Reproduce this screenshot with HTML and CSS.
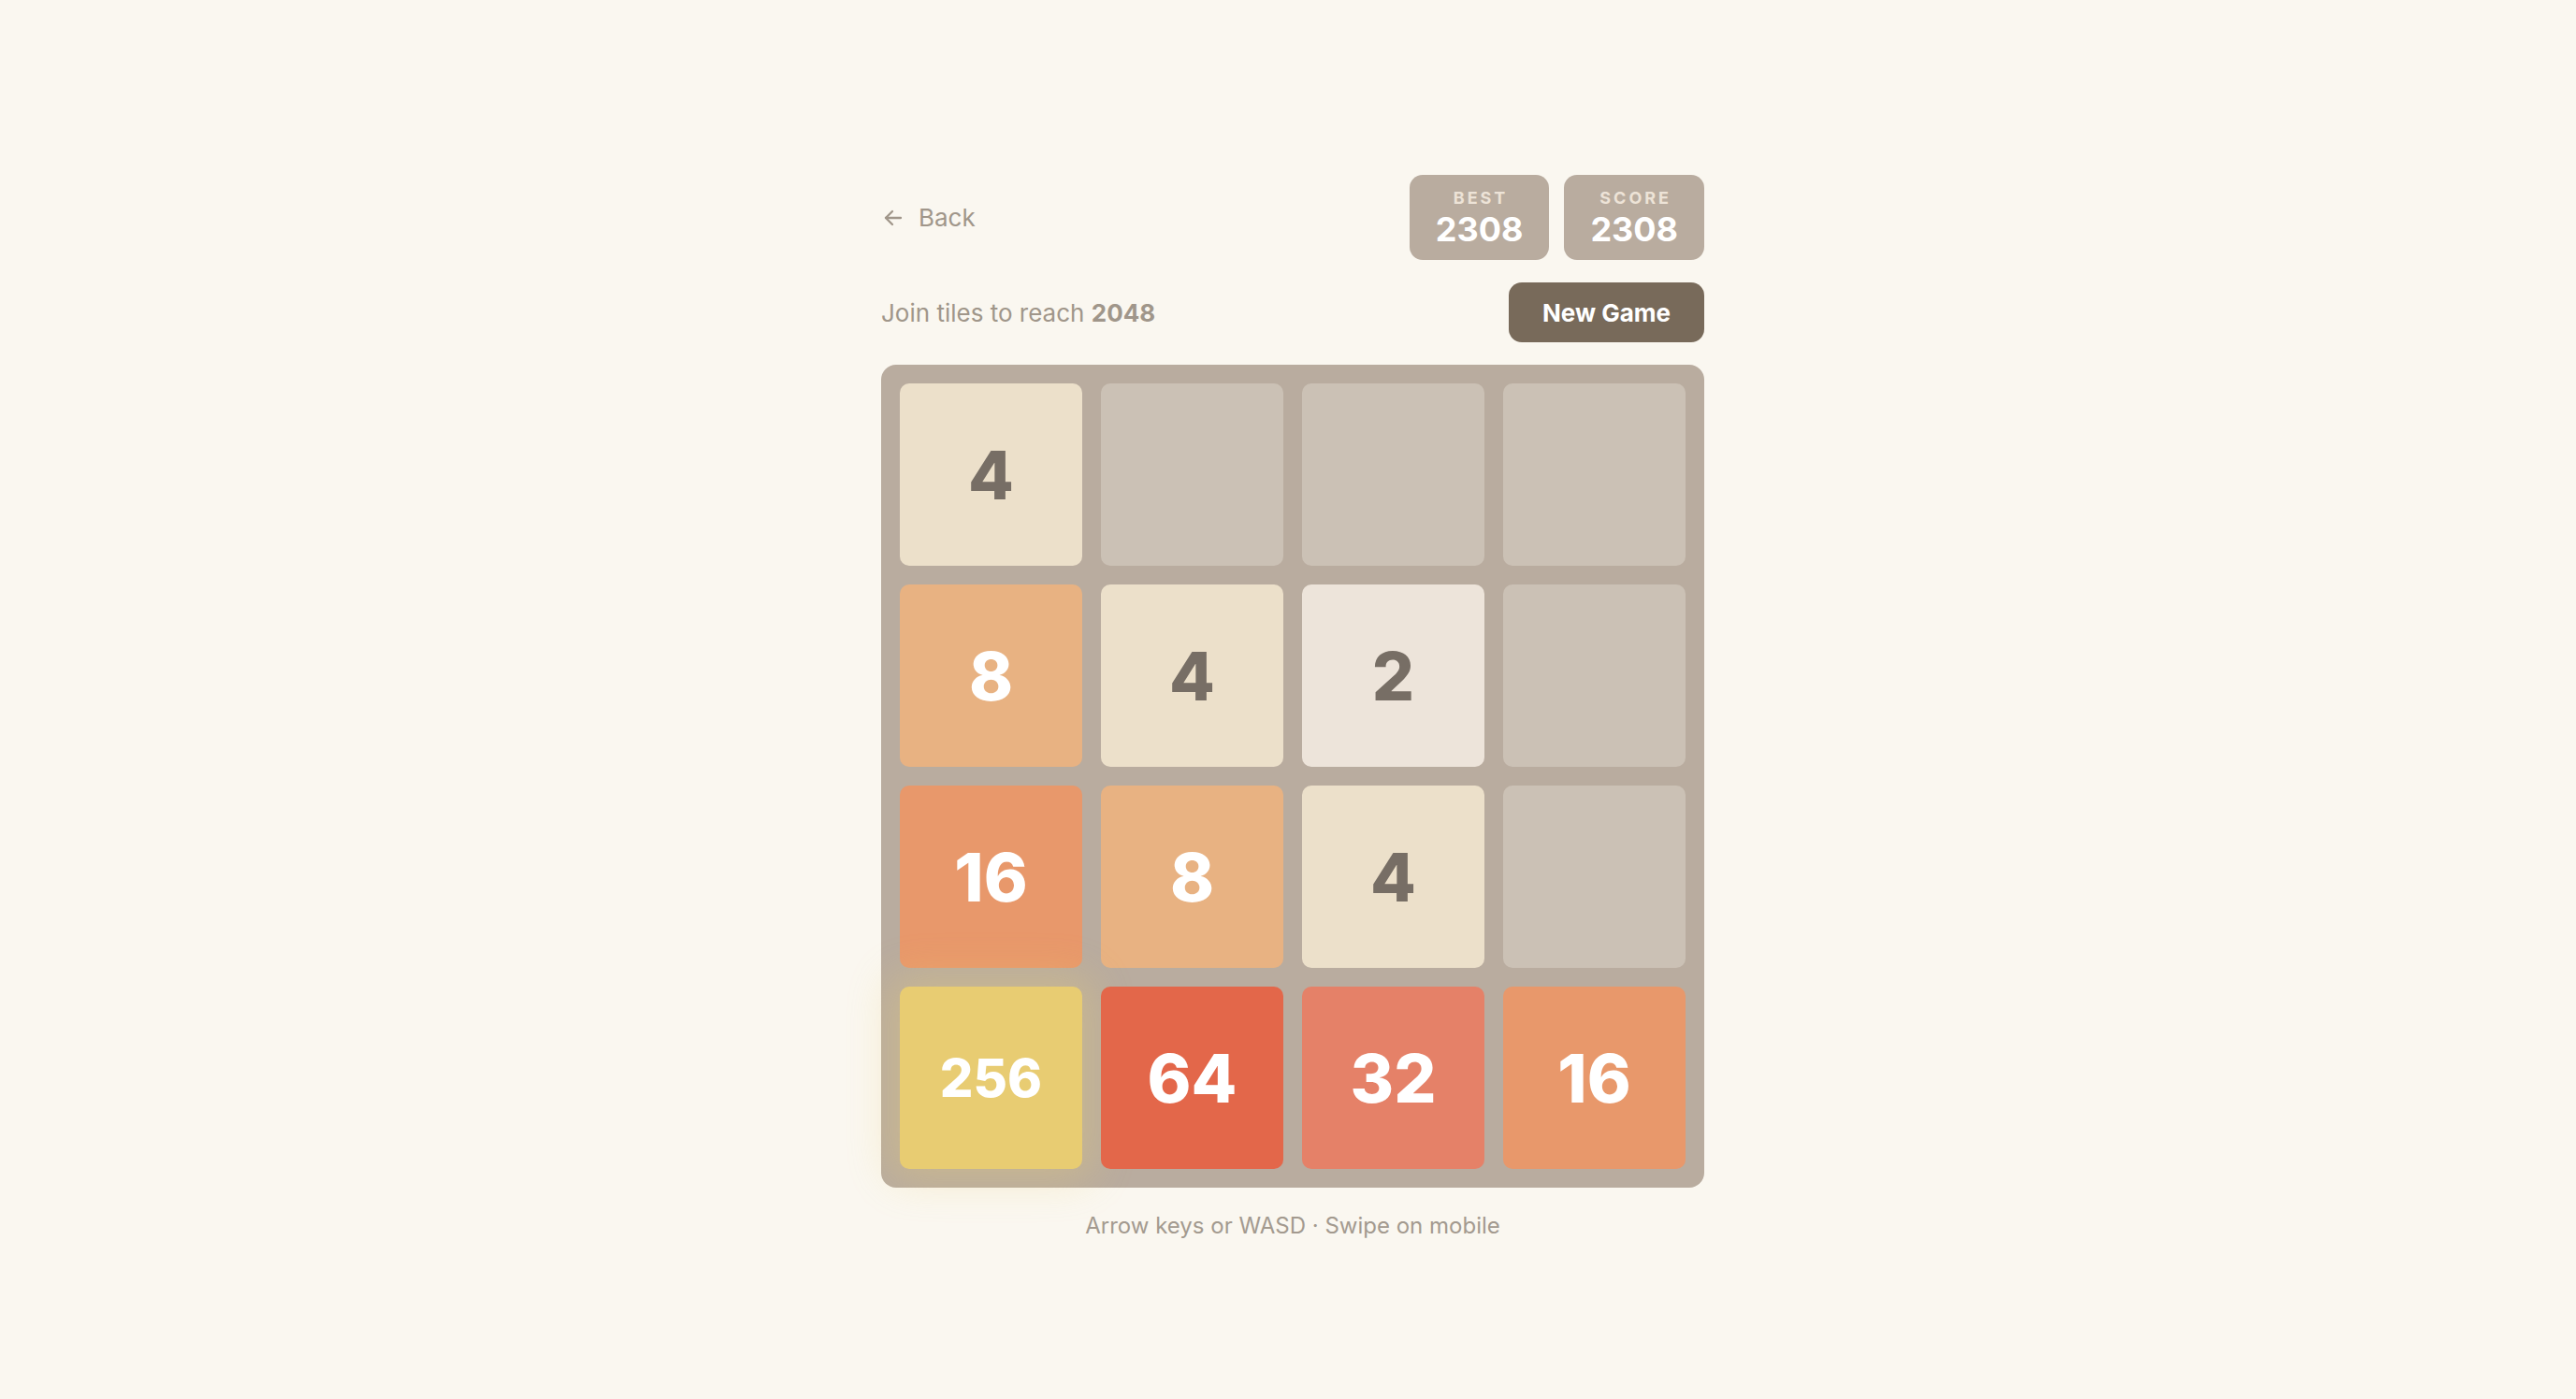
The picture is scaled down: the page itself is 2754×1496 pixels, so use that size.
FILE: index.html
```html
<!DOCTYPE html>
<html lang="en">
<head>
    <meta charset="UTF-8">
    <meta name="viewport" content="width=device-width, initial-scale=1.0">
    <title>2048</title>
    <link rel="stylesheet" href="styles.css">
</head>
<body>
    <div class="game">
        <div class="top-bar">
            <a class="back" href="#">
                <svg width="22" height="22" viewBox="0 0 22 22" fill="none" stroke="currentColor" stroke-width="2.3" stroke-linecap="round" stroke-linejoin="round">
                    <path d="M19 11H3"/>
                    <path d="M10 4L3 11L10 18"/>
                </svg>
                Back
            </a>
            <div class="scores">
                <div class="score-box">
                    <div class="score-label">BEST</div>
                    <div class="score-value">2308</div>
                </div>
                <div class="score-box">
                    <div class="score-label">SCORE</div>
                    <div class="score-value">2308</div>
                </div>
            </div>
        </div>
        <div class="sub-bar">
            <p class="intro">Join tiles to reach <b>2048</b></p>
            <button type="button" class="new-game">New Game</button>
        </div>
        <div class="board" id="board"></div>
        <p class="hint">Arrow keys or WASD · Swipe on mobile</p>
    </div>
    <script>
        const grid = [
            [4, 0, 0, 0],
            [8, 4, 2, 0],
            [16, 8, 4, 0],
            [256, 64, 32, 16]
        ];
        const board = document.getElementById('board');
        grid.forEach(row => {
            row.forEach(value => {
                const tile = document.createElement('div');
                tile.className = value ? 'tile tile-' + value : 'tile';
                if (value) {
                    tile.textContent = value;
                }
                board.appendChild(tile);
            });
        });
    </script>
</body>
</html>
```

FILE: styles.css
```css
body {
    margin: 0;
    padding: 0;
    background-color: #faf7f0;
    font-family: Inter, "Noto Sans", sans-serif;
    color: #a0968a;
}
.game {
    width: 880px;
    margin: 0 auto;
    padding-top: 187px;
    position: relative;
    left: 5px;
}
.top-bar, .sub-bar {
    display: flex;
    justify-content: space-between;
    align-items: center;
}
.back {
    display: flex;
    align-items: center;
    gap: 16px;
    padding-left: 2px;
    font-size: 26px;
    color: #a0968a;
    text-decoration: none;
}
.scores {
    display: flex;
    gap: 16px;
}
.score-box {
    height: 91px;
    box-sizing: border-box;
    padding: 15px 28px 0;
    border-radius: 14px;
    background-color: #b9ac9f;
    text-align: center;
}
.score-label {
    font-size: 18px;
    line-height: 20px;
    font-weight: 700;
    letter-spacing: 3px;
    color: #ede3d7;
    margin-right: -3px;
}
.score-value {
    font-size: 36px;
    line-height: 46px;
    font-weight: 700;
    color: #fff;
}
.sub-bar {
    margin-top: 24px;
}
.intro {
    margin: 0;
    font-size: 26px;
}
.intro b {
    font-weight: 700;
}
.new-game {
    width: 209px;
    height: 64px;
    border: none;
    border-radius: 14px;
    background-color: #786a5a;
    color: #fff;
    font-family: inherit;
    font-size: 26px;
    font-weight: 700;
    cursor: pointer;
}
.board {
    margin-top: 24px;
    display: grid;
    grid-template-columns: repeat(4, 195px);
    grid-auto-rows: 195px;
    gap: 20px;
    padding: 20px;
    border-radius: 16px;
    background-color: #b9ac9f;
}
.tile {
    display: flex;
    justify-content: center;
    align-items: center;
    border-radius: 10px;
    background-color: #cbc1b5;
    font-size: 71px;
    font-weight: 800;
    color: #fff;
}
.tile-2 {
    background-color: #ede4da;
    color: #776e65;
}
.tile-4 {
    background-color: #ece0ca;
    color: #776e65;
}
.tile-8 {
    background-color: #e8b282;
}
.tile-16 {
    background-color: #e8986b;
}
.tile-32 {
    background-color: #e58168;
}
.tile-64 {
    background-color: #e3674a;
}
.tile-256 {
    background-color: #e8cc72;
    font-size: 56px;
    box-shadow: 0 0 44px 12px rgba(240, 210, 110, 0.3);
}
.hint {
    margin: 26px 0 0;
    text-align: center;
    font-size: 24px;
    color: #a39a8f;
}
```
